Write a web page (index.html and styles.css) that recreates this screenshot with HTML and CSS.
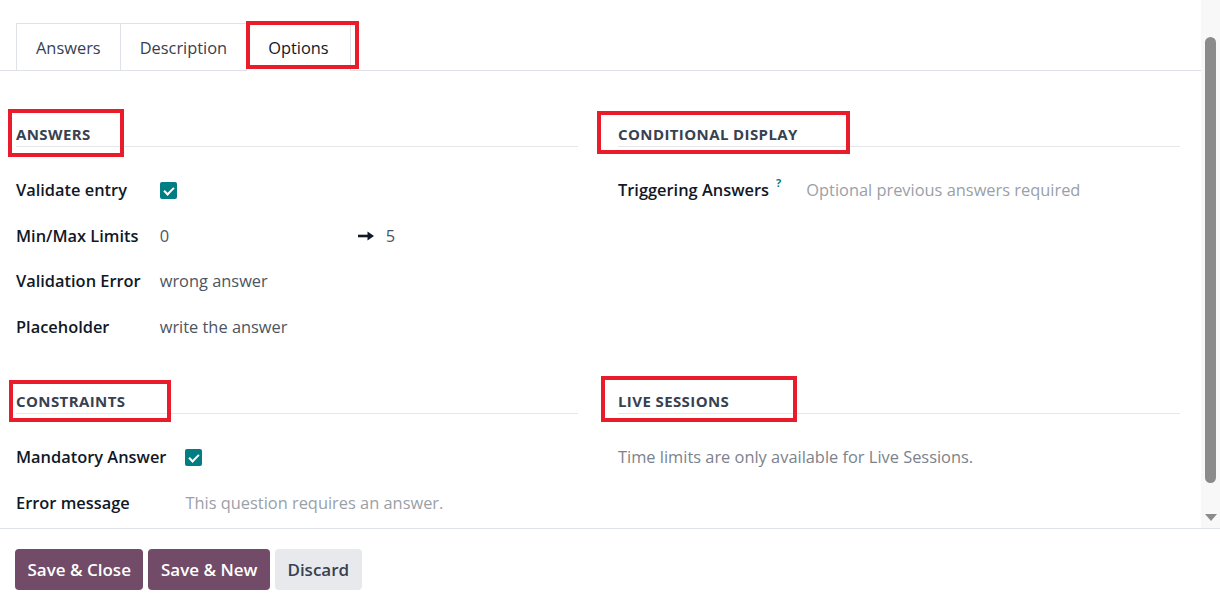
FILE: index.html
```html
<!DOCTYPE html>
<html lang="en">
<head>
    <meta charset="UTF-8">
    <meta name="viewport" content="width=device-width, initial-scale=1.0">
    <title>Question Options</title>
    <link rel="stylesheet" href="styles.css">
</head>
<body>
    <div class="window">
        <div class="viewport">
            <main class="sheet">
                <nav class="tabs">
                    <a class="tab">Answers</a>
                    <a class="tab">Description</a>
                    <a class="tab active">Options</a>
                </nav>

                <div class="groups">
                    <section class="group">
                        <h3 class="group-title">Answers</h3>
                        <div class="fields">
                            <label class="label">Validate entry</label>
                            <div class="value"><span class="check"></span></div>

                            <label class="label">Min/Max Limits</label>
                            <div class="value range">
                                <span class="range-min">0</span>
                                <svg class="arrow" width="18" height="12" viewBox="0 0 18 12">
                                    <path d="M1 6H12" stroke="#111827" stroke-width="2.6"/>
                                    <path d="M10.5 1.5L17 6L10.5 10.5Z" fill="#111827"/>
                                </svg>
                                <span>5</span>
                            </div>

                            <label class="label">Validation Error</label>
                            <div class="value">wrong answer</div>

                            <label class="label">Placeholder</label>
                            <div class="value">write the answer</div>
                        </div>
                    </section>

                    <section class="group">
                        <h3 class="group-title">Conditional Display</h3>
                        <div class="fields">
                            <label class="label">Triggering Answers<sup class="help">?</sup></label>
                            <div class="value placeholder">Optional previous answers required</div>
                        </div>
                    </section>

                    <section class="group">
                        <h3 class="group-title">Constraints</h3>
                        <div class="fields">
                            <label class="label">Mandatory Answer</label>
                            <div class="value"><span class="check"></span></div>

                            <label class="label">Error message</label>
                            <div class="value placeholder">This question requires an answer.</div>
                        </div>
                    </section>

                    <section class="group">
                        <h3 class="group-title">Live Sessions</h3>
                        <p class="note">Time limits are only available for Live Sessions.</p>
                    </section>
                </div>
            </main>

            <div class="scrollbar">
                <div class="thumb"></div>
                <div class="down"></div>
            </div>
        </div>

        <footer class="footer">
            <button class="btn primary">Save &amp; Close</button>
            <button class="btn primary">Save &amp; New</button>
            <button class="btn secondary">Discard</button>
        </footer>

        <!-- annotation boxes -->
        <div class="mark mark-options"></div>
        <div class="mark mark-answers"></div>
        <div class="mark mark-conditional"></div>
        <div class="mark mark-constraints"></div>
        <div class="mark mark-live"></div>
    </div>
</body>
</html>
```

FILE: styles.css
```css
* {
    box-sizing: border-box;
}
body {
    margin: 0;
    font-family: "Open Sans", "Noto Sans", sans-serif;
    font-size: 16.4px;
    color: #111827;
    background: #fff;
}
.window {
    position: relative;
    width: 1220px;
    height: 607px;
    overflow: hidden;
}
.viewport {
    display: flex;
    height: 528px;
}
.sheet {
    flex: 1;
    overflow: hidden;
}

/* tabs */
.tabs {
    display: flex;
    padding: 23px 0 0 16px;
    border-bottom: 1px solid #dee2e6;
}
.tab {
    padding: 0 19px;
    height: 47px;
    line-height: 48px;
    font-size: 16.4px;
    color: #374151;
    border: 1px solid #dee2e6;
    border-bottom: none;
    margin-bottom: -1px;
    margin-right: -1px;
    background: #fff;
}
.tab.active {
    color: #111827;
    height: 48px;
    padding: 0 21px;
}

/* groups */
.groups {
    display: grid;
    grid-template-columns: 1fr 1fr;
    column-gap: 40px;
    row-gap: 48px;
    padding: 49px 21px 0 16px;
}
.group-title {
    margin: 0 0 31px;
    font-size: 15px;
    font-weight: 700;
    letter-spacing: 0.4px;
    line-height: 22px;
    padding: 3px 0 1px;
    text-transform: uppercase;
    color: #374151;
    border-bottom: 1px solid #e5e7eb;
}
.fields {
    display: grid;
    grid-template-columns: max-content 1fr;
    column-gap: 19px;
    row-gap: 21.7px;
    align-items: center;
}
.label {
    font-weight: 600;
    line-height: 24px;
    color: #111827;
}
.help {
    color: #017e84;
    font-size: 11px;
    font-weight: 700;
    margin: 0 6px 0 7px;
    vertical-align: 9px;
    line-height: 0;
}
.value {
    line-height: 24px;
    color: #4b5563;
}
.placeholder {
    color: #9aa0a8;
}
.note {
    margin: 0;
    line-height: 24px;
    color: #7c828c;
}
.check {
    display: inline-block;
    width: 17px;
    height: 17px;
    margin-top: 4px;
    background: #017e84;
    border-radius: 2px;
    position: relative;
    vertical-align: top;
}
.check::after {
    content: "";
    position: absolute;
    left: 6px;
    top: 3px;
    width: 4px;
    height: 8px;
    border: solid #fff;
    border-width: 0 2px 2px 0;
    transform: rotate(45deg);
}
.range {
    display: flex;
    align-items: center;
}
.range-min {
    width: 197px;
}
.arrow {
    margin-right: 11px;
}

/* scrollbar */
.scrollbar {
    width: 19px;
    background: #f8f8f8;
    position: relative;
}
.thumb {
    position: absolute;
    left: 4px;
    top: 37px;
    width: 11px;
    height: 446px;
    background: #8b8b8b;
    border-radius: 6px;
}
.down {
    position: absolute;
    left: 4px;
    top: 514px;
    width: 0;
    height: 0;
    border-left: 6px solid transparent;
    border-right: 6px solid transparent;
    border-top: 7px solid #8b8b8b;
}

/* footer */
.footer {
    display: flex;
    gap: 5px;
    padding: 20px 15px;
    border-top: 1px solid #dee2e6;
}
.btn {
    height: 41px;
    padding: 0 12.5px;
    border: none;
    border-radius: 4px;
    font-family: inherit;
    font-size: 17px;
    font-weight: 600;
    cursor: pointer;
}
.primary {
    background: #714b67;
    color: #fff;
}
.secondary {
    background: #e7e9ed;
    color: #374151;
}

/* red annotation boxes */
.mark {
    position: absolute;
    border: 4px solid #e81c2a;
}
.mark-options {
    left: 246px;
    top: 21px;
    width: 113px;
    height: 48px;
}
.mark-answers {
    left: 8px;
    top: 109px;
    width: 116px;
    height: 48px;
}
.mark-conditional {
    left: 597px;
    top: 111px;
    width: 253px;
    height: 43px;
}
.mark-constraints {
    left: 9px;
    top: 380px;
    width: 162px;
    height: 42px;
}
.mark-live {
    left: 601px;
    top: 376px;
    width: 196px;
    height: 46px;
}
```
